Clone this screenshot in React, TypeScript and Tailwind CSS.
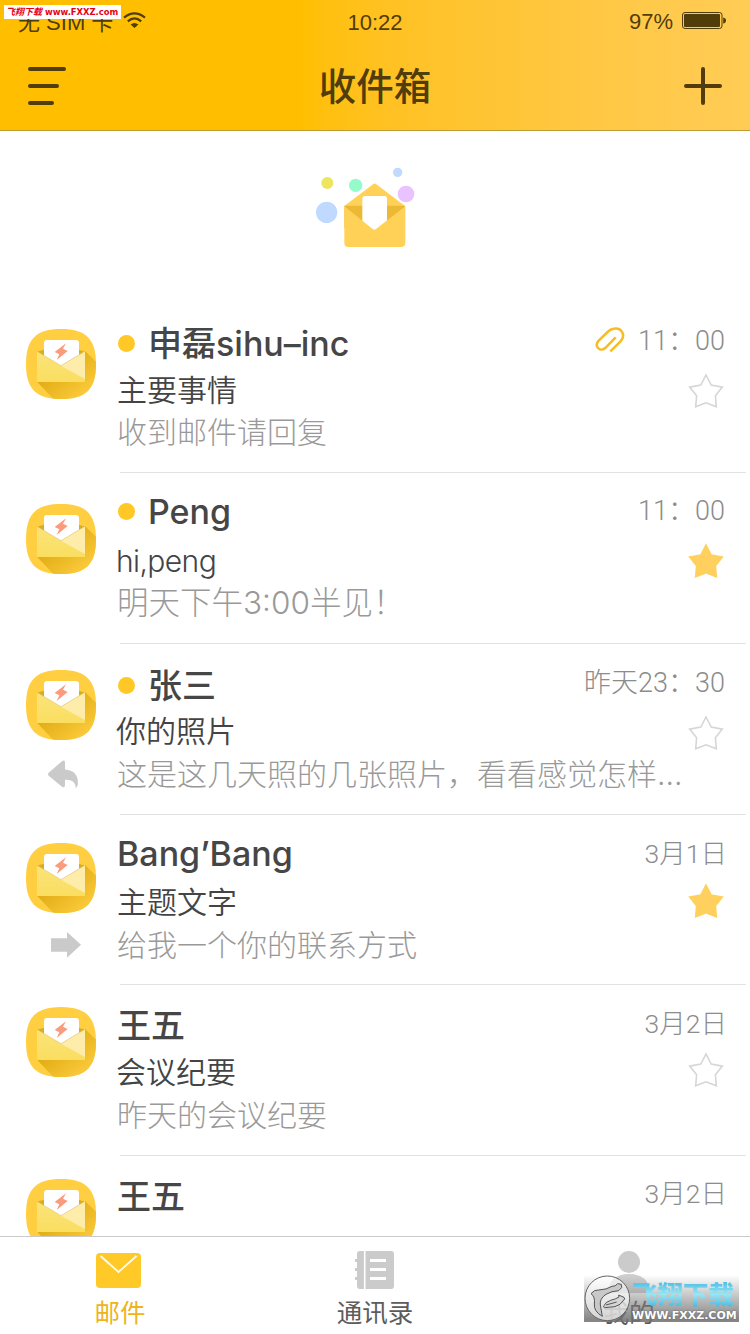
import { clsx } from "clsx";

interface Mail {
  id: number;
  sender: string;
  subject?: string;
  preview?: string;
  date: string;
  dateStyle: string;
  unread?: boolean;
  attachment?: boolean;
  starred?: boolean;
  action?: "reply" | "forward";
  height: string;
  avatarOffset: string;
  nameOffset: string;
  starOffset: string;
  subjectStyle: string;
  previewStyle?: string;
}

const mails: Mail[] = [
  {
    id: 1,
    sender: "申磊sihu–inc",
    subject: "主要事情",
    preview: "收到邮件请回复",
    date: "11：00",
    dateStyle: "pt-[3px] text-[27px]",
    unread: true,
    attachment: true,
    height: "h-[171px]",
    avatarOffset: "pt-[27px]",
    nameOffset: "pt-[19px]",
    starOffset: "pt-[5px]",
    subjectStyle: "pt-px",
  },
  {
    id: 2,
    sender: "Peng",
    subject: "hi,peng",
    preview: "明天下午3:00半见！",
    date: "11：00",
    dateStyle: "pt-[2px] text-[27px]",
    unread: true,
    starred: true,
    height: "h-[171px]",
    avatarOffset: "pt-[31px]",
    nameOffset: "pt-[16px]",
    starOffset: "pt-[4px]",
    subjectStyle: "-ml-px pt-px tracking-[-0.6px]",
    previewStyle: "text-[31.5px]",
  },
  {
    id: 3,
    sender: "张三",
    subject: "你的照片",
    preview: "这是这几天照的几张照片，看看感觉怎样...",
    date: "昨天23：30",
    dateStyle: "pt-[3px] text-[27px]",
    unread: true,
    action: "reply",
    height: "h-[171px]",
    avatarOffset: "pt-[26px]",
    nameOffset: "pt-[19px]",
    starOffset: "pt-[5px]",
    subjectStyle: "-ml-px",
  },
  {
    id: 4,
    sender: "Bang’Bang",
    subject: "主题文字",
    preview: "给我一个你的联系方式",
    date: "3月1日",
    dateStyle: "-mr-[2px] pt-[3px] text-[26.5px]",
    starred: true,
    action: "forward",
    height: "h-[170px]",
    avatarOffset: "pt-[28px]",
    nameOffset: "pt-[16px]",
    starOffset: "pt-[2px]",
    subjectStyle: "",
  },
  {
    id: 5,
    sender: "王五",
    subject: "会议纪要",
    preview: "昨天的会议纪要",
    date: "3月2日",
    dateStyle: "-mr-[2px] pt-[3px] text-[26.5px]",
    height: "h-[171px]",
    avatarOffset: "pt-[22px]",
    nameOffset: "pt-[18px]",
    starOffset: "pt-px",
    subjectStyle: "-ml-px",
  },
  {
    id: 6,
    sender: "王五",
    date: "3月2日",
    dateStyle: "-mr-[2px] pt-[2px] text-[26.5px]",
    height: "h-[171px]",
    avatarOffset: "pt-[23px]",
    nameOffset: "pt-[18px]",
    starOffset: "pt-[5px]",
    subjectStyle: "",
  },
];

function WifiIcon() {
  return (
    <svg width="23" height="17" viewBox="0 0 23 17" fill="none" stroke="#503d0a" strokeWidth="2.2">
      <path d="M1 5.6Q11.5-2.8 22 5.6" />
      <path d="M4.8 9.3Q11.5 3.6 18.2 9.3" />
      <path d="M11.5 16L7.6 12.6Q11.5 9.4 15.4 12.6Z" fill="#503d0a" stroke="none" />
    </svg>
  );
}

function BatteryIcon() {
  return (
    <svg width="44" height="17" viewBox="0 0 44 17">
      <rect x=".5" y=".5" width="39.5" height="16" rx="2.5" fill="none" stroke="#503d0a" />
      <rect x="2" y="2" width="36" height="13" rx="1" fill="#503d0a" />
      <path d="M41.2 5.5Q44 6 44 8.5T41.2 11.5Z" fill="#503d0a" />
    </svg>
  );
}

function HeroIcon() {
  return (
    <svg width="130" height="105" viewBox="0 0 390 315">
      <circle cx="82" cy="84" r="18" fill="#ede55d" />
      <circle cx="167" cy="91" r="20" fill="#96fbcb" />
      <circle cx="293" cy="52" r="14" fill="#c0daff" />
      <circle cx="318" cy="117" r="25" fill="#e9c3ff" />
      <circle cx="80" cy="172" r="32" fill="#c0daff" />
      <path d="M133 153L219 88Q224 83 229 88L315 153Z" fill="#ffd257" />
      <path d="M133 152H315V220H133Z" fill="#ebb935" />
      <path d="M187 208V131Q187 123 195 123H253Q261 123 261 131V208L224 235Z" fill="#fff" />
      <path
        d="M133 154L217 221Q223 226 229 221L316 154V264Q316 276 304 276H145Q133 276 133 264Z"
        fill="#ffd257"
      />
    </svg>
  );
}

function MailAvatar() {
  return (
    <svg width="70" height="70" viewBox="0 0 210 210" className="block">
      <defs>
        <linearGradient id="avatarShade" x1="0" y1="0" x2="1" y2="1">
          <stop offset=".35" stopColor="#e2ae16" />
          <stop offset=".9" stopColor="#fdcc3e" />
        </linearGradient>
        <linearGradient id="avatarFront" x1="0" y1="0" x2="0" y2="1">
          <stop offset="0" stopColor="#fbe37a" />
          <stop offset="1" stopColor="#fade60" />
        </linearGradient>
        <clipPath id="avatarShape">
          <path d="M105 0C180 0 210 30 210 105S180 210 105 210 0 180 0 105 30 0 105 0Z" />
        </clipPath>
      </defs>
      <g clipPath="url(#avatarShape)">
        <rect width="210" height="210" fill="#ffcf41" />
        <path d="M177 66L210 98V210H82L33 158Z" fill="url(#avatarShade)" />
        <path d="M33 68L54 62H158L177 68V110H33Z" fill="#d9ad20" />
        <path d="M54 88V42Q54 33 63 33H150Q159 33 159 42V88L105 114Z" fill="#fff" />
        <path d="M33 67L105 110L177 67V159H33Z" fill="url(#avatarFront)" />
        <path d="M105 110L177 67V150Z" fill="#feedaa" />
        <path d="M33 67L105 110L177 67" fill="none" stroke="#d9bd63" strokeWidth="1.5" />
        <path d="M120 43L86 69L100 76L92 93L125 66L111 59Z" fill="#fb9b7c" />
      </g>
    </svg>
  );
}

function StarIcon({ filled }: { filled?: boolean }) {
  return (
    <svg width="36" height="36" viewBox="0 0 36 36" className="block">
      <path
        d="M18 2L23.2 12.1L34.3 14.1L27.4 22.7L28.3 33.8L18 29.8L7.7 33.8L8.6 22.7L1.7 14.1L12.8 12.1Z"
        fill={filled ? "#ffd05d" : "none"}
        stroke={filled ? "#ffd05d" : "#d6d6d6"}
        strokeWidth="1.6"
      />
    </svg>
  );
}

function ClipIcon() {
  return (
    <svg width="30" height="26" viewBox="-3 0 90 78" fill="none" stroke="#f7bc22" strokeWidth="7.5">
      <path d="M43 73L73 44C91 25 77 1 53 5Q45 6 38 12L8 41C-7 57 12 76 27 64L59 31" />
    </svg>
  );
}

function ReplyIcon() {
  return (
    <svg width="30" height="29" viewBox="0 0 90 86" className="mt-[20px] ml-[48px] block">
      <path
        d="M2 38L42 3Q51-3 51 8V28C80 30 93 48 89 76L83 84C83 66 72 58 51 59V74Q51 85 42 80L2 47Q-2 42 2 38Z"
        fill="#cacaca"
      />
    </svg>
  );
}

function ForwardIcon() {
  return (
    <svg width="30" height="26" viewBox="0 0 90 78" className="mt-[19px] ml-[51px] block">
      <path d="M0 19H48V0L90 38L48 77V59H0Z" fill="#cacaca" />
    </svg>
  );
}

function MailRow({ mail }: { mail: Mail }) {
  return (
    <li className={clsx("flex shrink-0", mail.height)}>
      <div className={clsx("w-[117px] shrink-0", mail.avatarOffset)}>
        <div className="pl-[26px]">
          <MailAvatar />
        </div>
        {mail.action === "reply" && <ReplyIcon />}
        {mail.action === "forward" && <ForwardIcon />}
      </div>
      <div className="flex min-w-0 flex-1 flex-col">
        <div className="flex h-[66px] shrink-0 justify-between">
          <div className={clsx("flex items-start", mail.nameOffset)}>
            {mail.unread && (
              <span className="mt-[14px] mr-[13px] ml-px size-[17px] rounded-full bg-[#ffc827]" />
            )}
            <span className="text-[34px] leading-[46px] font-medium whitespace-nowrap text-[#464646]">
              {mail.sender}
            </span>
          </div>
          <div className="flex items-start gap-[13px] pt-[16px] pr-[25px]">
            {mail.attachment && (
              <span className="pt-[9px]">
                <ClipIcon />
              </span>
            )}
            <span
              className={clsx(
                "font-['Roboto','Noto_Sans_CJK_SC',sans-serif] leading-[40px] font-light whitespace-nowrap text-[#8c8c8c]",
                mail.dateStyle,
              )}
            >
              {mail.date}
            </span>
          </div>
        </div>
        {mail.subject && (
          <div className="flex h-[42px] shrink-0 justify-between">
            <span className={clsx("text-[30px] leading-[42px] font-[350] text-[#444]", mail.subjectStyle)}>
              {mail.subject}
            </span>
            <span className={clsx("pr-[26px]", mail.starOffset)}>
              <StarIcon filled={mail.starred} />
            </span>
          </div>
        )}
        {mail.preview && (
          <p
            className={clsx(
              "leading-[44px] font-light whitespace-nowrap text-[#999]",
              mail.previewStyle ?? "text-[30px]",
            )}
          >
            {mail.preview}
          </p>
        )}
        <div className="mt-auto mr-1 ml-[3px] h-px bg-[#e2e2e2]" />
      </div>
    </li>
  );
}

function StatusBar() {
  return (
    <div className="grid h-[43px] grid-cols-3 font-['Liberation_Sans','Noto_Sans_CJK_SC',sans-serif] text-[22px] leading-[45px] text-[#503d0a]">
      <div className="flex pl-[18px]">
        <span className="w-[105px] whitespace-nowrap">无 SIM 卡</span>
        <span className="pt-[12px]">
          <WifiIcon />
        </span>
      </div>
      <span className="text-center">10:22</span>
      <div className="flex justify-end pr-[24px]">
        <span className="mr-[9px] leading-[44px]">97%</span>
        <span className="pt-[12px]">
          <BatteryIcon />
        </span>
      </div>
    </div>
  );
}

function Header() {
  return (
    <header className="h-[131px] shrink-0 border-b border-[#bf9b36] bg-linear-to-r from-[#ffbf00] from-40% to-[#ffcc55]">
      <StatusBar />
      <div className="flex h-[86px] items-center justify-between px-[28px]">
        <button type="button" aria-label="菜单" className="flex w-[112px] flex-col gap-[13px]">
          <span className="h-1 w-[38px] rounded-full bg-[#503d0a]" />
          <span className="h-1 w-[31px] rounded-full bg-[#503d0a]" />
          <span className="h-1 w-[26px] rounded-full bg-[#503d0a]" />
        </button>
        <h1 className="pt-[3px] text-[37.5px] font-medium text-[#503d0a]">收件箱</h1>
        <button type="button" aria-label="写邮件" className="flex w-[112px] justify-end">
          <svg width="38" height="38" viewBox="0 0 38 38" stroke="#503d0a" strokeWidth="4" strokeLinecap="round">
            <path d="M19 2V36M2 19H36" />
          </svg>
        </button>
      </div>
    </header>
  );
}

function TabBar() {
  return (
    <nav className="grid h-[98px] shrink-0 grid-cols-[240px_270px_238px] border-t border-[#cacaca] bg-white text-[25.5px] leading-[36px] text-[#5c5c5c]">
      <a className="flex flex-col items-center text-[#edb41d]">
        <span className="flex h-[58px] items-start pt-[16px] pr-[3px]">
          <svg width="45" height="35" viewBox="0 0 45 35">
            <rect width="45" height="35" rx="4" fill="#ffc928" />
            <path d="M4.5 3L22.5 19L40.5 3" fill="none" stroke="#fffbe8" strokeWidth="1.8" />
          </svg>
        </span>
        邮件
      </a>
      <a className="flex flex-col items-center">
        <span className="flex h-[58px] items-start pt-[14px] pr-px">
          <svg width="39" height="38" viewBox="0 0 39 38">
            <rect x="2" width="37" height="38" rx="3" fill="#cbcbcb" />
            <path d="M0 9.5H4M0 18.5H4M0 27.5H4" stroke="#cbcbcb" strokeWidth="3" />
            <path d="M9.7 0V38" stroke="#fff" strokeWidth="1.6" />
            <path d="M15 9.5H31M15 18.5H31M15 27.5H31" stroke="#fff" strokeWidth="3" />
          </svg>
        </span>
        通讯录
      </a>
      <a className="flex flex-col items-center">
        <span className="flex h-[58px] items-start pt-[14px]">
          <svg width="44" height="42" viewBox="0 0 44 42" fill="#cbcbcb">
            <circle cx="22" cy="11" r="11" />
            <path d="M1 42Q2 23 22 23T43 42Z" />
          </svg>
        </span>
        我的
      </a>
    </nav>
  );
}

function SiteBadge() {
  return (
    <div className="absolute right-[11px] bottom-[12px] flex h-[47px] w-[155px] bg-linear-to-b from-white/10 to-[#707070]/85 to-95%">
      <svg width="48" height="48" viewBox="0 0 144 144" className="shrink-0" fill="none">
        <circle cx="70" cy="70" r="67" fill="#fff" fillOpacity=".65" stroke="#666" strokeWidth="3" />
        <path
          d="M21 56Q31 43 44 45Q68 44 84 34Q94 35 101 26L112 28L113 38L104 47Q83 48 66 58Q46 71 49 90L55 124Q29 109 31 87Q34 65 21 56Z"
          fill="#c8c8c8"
          stroke="#555"
          strokeWidth="3"
        />
        <path
          d="M60 92Q64 81 80 76Q96 72 105 66L104 60L120 67L122 72Q109 92 93 95L61 98Q57 97 60 92ZM66 90L98 81"
          fill="#d5d5d5"
          stroke="#555"
          strokeWidth="3"
        />
      </svg>
      <div className="min-w-0 flex-1 whitespace-nowrap">
        <div className="mt-[5px] bg-linear-to-b from-[#36b8e3] via-[#99e6f3] to-[#37b2de] bg-clip-text text-[25.5px] leading-[29px] font-black text-transparent">
          飞翔下载
        </div>
        <div className="font-['DejaVu_Sans',sans-serif] text-[11px] leading-[13px] font-bold text-white [text-shadow:0_0_2px_#555]">
          WWW.FXXZ.COM
        </div>
      </div>
    </div>
  );
}

export default function App() {
  return (
    <div className="relative flex h-[1334px] w-[750px] flex-col overflow-hidden bg-white font-['Inter','Noto_Sans_CJK_SC',sans-serif]">
      <Header />
      <main className="min-h-0 flex-1 overflow-hidden">
        <div className="flex h-[171px] pt-[24px] pl-[300px]">
          <HeroIcon />
        </div>
        <ul className="flex flex-col">
          {mails.map((mail) => (
            <MailRow key={mail.id} mail={mail} />
          ))}
        </ul>
      </main>
      <TabBar />
      <SiteBadge />
      <div className="absolute top-[5px] left-[4px] flex h-[14px] w-[117px] items-center gap-[3px] bg-white pl-[2px] text-[9px] leading-[14px] font-bold whitespace-nowrap text-[#e60012]">
        <span className="italic">飞翔下载</span>
        <span className="font-['DejaVu_Sans',sans-serif] text-[8.4px]">www.FXXZ.com</span>
      </div>
    </div>
  );
}
